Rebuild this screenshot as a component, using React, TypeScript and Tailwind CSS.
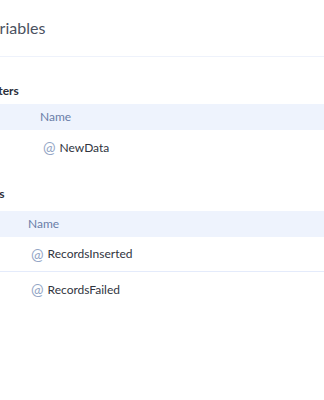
type Section = {
  title: string;
  offset: string;
  gap: string;
  tableGap: string;
  nameCol: string;
  rows: string[];
};

const sections: Section[] = [
  { title: "Parameters", offset: "-ml-[42px]", gap: "mt-[26px]", tableGap: "mt-[5px]", nameCol: "pl-[40px]", rows: ["NewData"] },
  { title: "Variables", offset: "-ml-[44px]", gap: "mt-[21px]", tableGap: "mt-[9px]", nameCol: "pl-[28px]", rows: ["RecordsInserted", "RecordsFailed"] },
];

function VarTable({ section }: { section: Section }) {
  return (
    <div className={section.gap}>
      <h3 className={`${section.offset} text-[12px] font-bold leading-[16px] text-[#2b303b]`}>
        {section.title}
      </h3>
      <div className={section.tableGap}>
        <div className={`flex h-[26px] items-center bg-[#eef3fd] ${section.nameCol} text-[12px] text-[#6a7ea8]`}>
          Name
        </div>
        {section.rows.map((row, i) => (
          <div
            key={row}
            className={`flex h-[35px] items-center ${section.nameCol} ${
              i < section.rows.length - 1 ? "border-b border-[#e4ebfb]" : ""
            }`}
          >
            <span className="ml-[3px] text-[15px] leading-none text-[#94a6c6]">@</span>
            <span className="ml-[4px] text-[12px] text-[#30343e]">{row}</span>
          </div>
        ))}
      </div>
    </div>
  );
}

export default function App() {
  return (
    <div className="h-[400px] w-[324px] overflow-hidden bg-white font-['Lato',sans-serif]">
      <div className="flex h-[57px] items-center border-b border-[#eef2fb]">
        <h2 className="-ml-[18px] text-[16px] text-[#4a5160]">Variables</h2>
      </div>
      {sections.map((s) => (
        <VarTable key={s.title} section={s} />
      ))}
    </div>
  );
}
